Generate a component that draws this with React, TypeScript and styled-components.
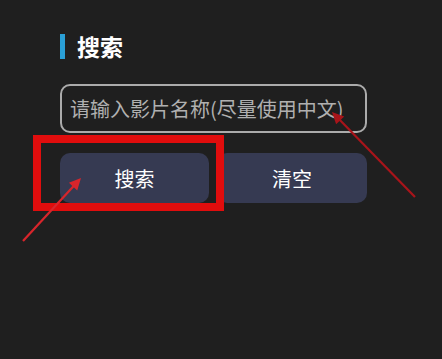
import React from "react";
import styled, { createGlobalStyle } from "styled-components";

const GlobalStyle = createGlobalStyle`
	html, body {
		margin: 0;
		padding: 0;
		background: #1f1f1f;
	}
	body {
		width: 442px;
		height: 359px;
		overflow: hidden;
		font-family: "Noto Sans CJK SC", "Noto Sans", sans-serif;
	}
`;

const Page = styled.div`
	position: relative;
	width: 442px;
	height: 359px;
	box-sizing: border-box;
	padding: 32px 0 0 60px;
	background: #1f1f1f;
`;

const Panel = styled.div`
	display: flex;
	flex-direction: column;
	width: 307px;
`;

const Title = styled.h2`
	display: flex;
	align-items: center;
	gap: 12px;
	margin: 0;
	height: 28px;
	color: #ffffff;
	font-size: 23px;
	font-weight: 700;
	line-height: 28px;

	&::before {
		content: "";
		display: block;
		width: 5px;
		height: 25px;
		background: #2a9fd6;
	}
`;

const SearchInput = styled.input`
	box-sizing: border-box;
	margin-top: 24px;
	width: 100%;
	height: 49px;
	padding: 0 8px;
	border: 2px solid #ababab;
	border-radius: 10px;
	background: transparent;
	color: #dddddd;
	font-family: inherit;
	font-size: 20px;
	outline: none;

	&::placeholder {
		color: #b0b0b0;
	}
`;

const ButtonRow = styled.div`
	position: relative;
	display: grid;
	grid-template-columns: 149px 1fr;
	gap: 8px;
	margin-top: 20px;
`;

const ActionButton = styled.button`
	height: 50px;
	border: none;
	border-radius: 10px;
	background: #363a52;
	color: #ffffff;
	font-family: inherit;
	font-size: 20px;
	cursor: pointer;
`;

const Highlight = styled.div`
	position: absolute;
	left: -27px;
	top: -18px;
	width: 191px;
	height: 76px;
	box-sizing: border-box;
	border: 8px solid #e00d0d;
	pointer-events: none;
`;

const Arrows = styled.svg`
	position: absolute;
	left: 0;
	top: 0;
	pointer-events: none;
`;

const Arrow: React.FC<{ x1: number; y1: number; x2: number; y2: number; color: string }> = ({
	x1,
	y1,
	x2,
	y2,
	color,
}) => {
	const angle = Math.atan2(y2 - y1, x2 - x1);
	const len = 13;
	const spread = 0.45;
	const ax = x2 - len * Math.cos(angle - spread);
	const ay = y2 - len * Math.sin(angle - spread);
	const bx = x2 - len * Math.cos(angle + spread);
	const by = y2 - len * Math.sin(angle + spread);
	return (
		<g>
			<line x1={x1} y1={y1} x2={x2 - 6 * Math.cos(angle)} y2={y2 - 6 * Math.sin(angle)} stroke={color} strokeWidth={2.2} />
			<polygon points={`${x2},${y2} ${ax},${ay} ${bx},${by}`} fill={color} />
		</g>
	);
};

const App: React.FC = () => {
	return (
		<>
			<GlobalStyle />
			<Page>
				<Panel>
					<Title>搜索</Title>
					<SearchInput placeholder="请输入影片名称(尽量使用中文)" />
					<ButtonRow>
						<ActionButton>搜索</ActionButton>
						<ActionButton>清空</ActionButton>
						<Highlight />
					</ButtonRow>
				</Panel>
				<Arrows width="442" height="359" viewBox="0 0 442 359">
					<Arrow x1={415} y1={197} x2={332} y2={112} color="#a8141a" />
					<Arrow x1={23} y1={241} x2={81} y2={178} color="#d8252b" />
				</Arrows>
			</Page>
		</>
	);
};

export default App;
